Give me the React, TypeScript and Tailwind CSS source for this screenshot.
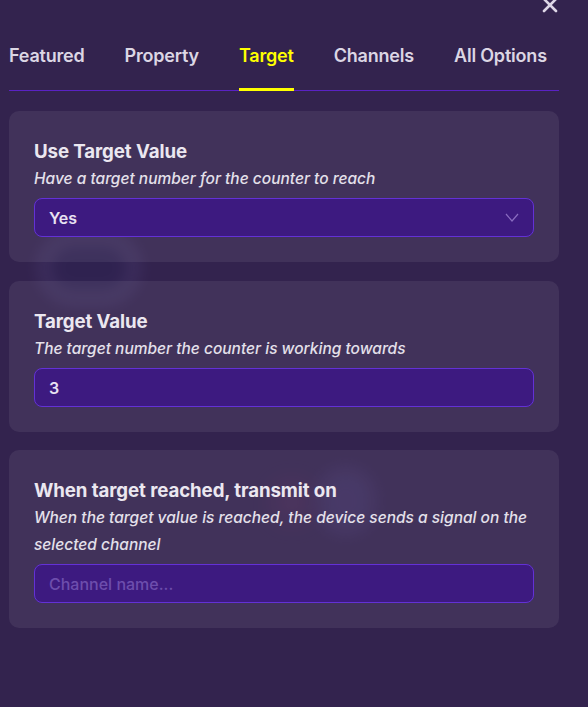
import React from "react";

const Card = ({
  title,
  desc,
  children,
  className = "",
}: {
  title: string;
  desc: string;
  children: React.ReactNode;
  className?: string;
}) => (
  <div className={`relative rounded-[10px] bg-[#ffffff12] px-[25px] pt-[28px] pb-[25px] ${className}`}>
    <div className="text-[18.7px] leading-[26px] font-bold text-[#ebe7f0] tracking-[-0.1px]">{title}</div>
    <div className="text-[15.5px] leading-[27px] italic font-medium text-[#e4e0ea]">{desc}</div>
    <div className="mt-[6px]">{children}</div>
  </div>
);

export default function App() {
  const tabs = ["Featured", "Property", "Target", "Channels", "All Options"];
  return (
    <div
      className="relative w-[588px] h-[707px] overflow-hidden bg-[#33234e]"
      style={{ fontFamily: "Inter, 'Noto Sans', sans-serif" }}
    >
      {/* blurred background scenery */}
      <div className="absolute left-[36px] top-[230px] w-[106px] h-[76px] rounded-full border-[16px] border-[#45376a] bg-[#2c2254] blur-[7px] opacity-45" />
      <div className="absolute left-[318px] top-[468px] w-[56px] h-[66px] rounded-full bg-[#4a3a78] blur-[9px] opacity-35" />
      <div className="absolute left-[272px] top-[482px] w-[40px] h-[40px] rounded-full bg-[#6a2e5e] blur-[12px] opacity-25" />

      {/* close */}
      <svg
        className="absolute left-[541px] top-[-4px]"
        width="18"
        height="18"
        viewBox="0 0 18 18"
        fill="none"
        stroke="#ddd6e6"
        strokeWidth="2.6"
        strokeLinecap="round"
      >
        <path d="M3 3 L15 15 M15 3 L3 15" />
      </svg>

      <div className="relative pl-[9px] pr-[29px]">
        <div className="flex gap-[40px] pt-[44px] border-b border-[#5a22c4]">
          {tabs.map((t) => (
            <div
              key={t}
              className={`-mb-[1px] pb-[20px] border-b-[3px] text-[18px] leading-[24px] font-semibold tracking-[-0.2px] ${
                t === "Target" ? "border-[#ffff00] text-[#ffff00]" : "border-transparent text-[#dcd6e4]"
              }`}
            >
              {t}
            </div>
          ))}
        </div>

        <div className="mt-[20px] flex flex-col">
          <Card title="Use Target Value" desc="Have a target number for the counter to reach">
            <div className="flex items-center justify-between h-[39px] rounded-[8px] border border-[#6331d6] bg-[#3d1a80] pl-[14px] pr-[14px]">
              <span className="text-[16px] font-semibold text-[#e8e2f2]">Yes</span>
              <svg width="14" height="9" viewBox="0 0 14 9" fill="none" stroke="#8a6cc0" strokeWidth="1.2">
                <path d="M1 1 L7 8 L13 1" />
              </svg>
            </div>
          </Card>
          <Card className="mt-[19px]" title="Target Value" desc="The target number the counter is working towards">
            <div className="flex items-center h-[39px] rounded-[8px] border border-[#6331d6] bg-[#3d1a80] pl-[14px]">
              <span className="text-[16px] font-semibold text-[#e8e2f2]">3</span>
            </div>
          </Card>
          <Card
            className="mt-[18px]"
            title="When target reached, transmit on"
            desc="When the target value is reached, the device sends a signal on the selected channel"
          >
            <div className="flex items-center h-[39px] rounded-[8px] border border-[#6331d6] bg-[#3d1a80] pl-[14px]">
              <span className="text-[16px] font-medium text-[#6d4ead]">Channel name...</span>
            </div>
          </Card>
        </div>
      </div>
    </div>
  );
}
